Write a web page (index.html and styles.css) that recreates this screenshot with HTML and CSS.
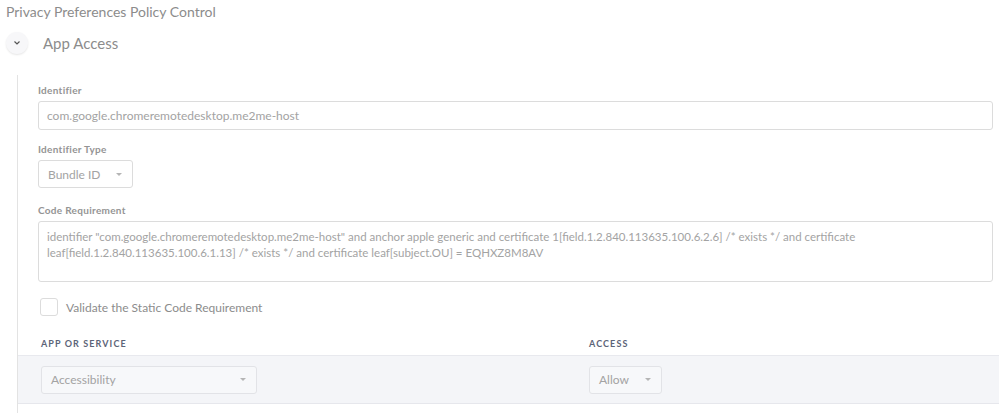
FILE: index.html
```html
<!DOCTYPE html>
<html lang="en">
<head>
    <meta charset="UTF-8">
    <title>Privacy Preferences Policy Control</title>
    <link rel="stylesheet" href="styles.css">
</head>
<body>
    <h1 class="page-title">Privacy Preferences Policy Control</h1>
    <div class="section-head">
        <span class="toggle">
            <svg width="8" height="6" viewBox="0 0 8 6"><path d="M1.5 1.5 L4 4 L6.5 1.5" fill="none" stroke="#555" stroke-width="1.2"/></svg>
        </span>
        <span class="section-title">App Access</span>
    </div>
    <div class="section-body">
        <div class="fields">
            <label class="field-label">Identifier</label>
            <div class="text-input">com.google.chromeremotedesktop.me2me-host</div>

            <label class="field-label">Identifier Type</label>
            <div class="select select-bundle">Bundle ID <span class="caret"></span></div>

            <label class="field-label">Code Requirement</label>
            <div class="text-area">identifier "com.google.chromeremotedesktop.me2me-host" and anchor apple generic and certificate 1[field.1.2.840.113635.100.6.2.6] /* exists */ and certificate leaf[field.1.2.840.113635.100.6.1.13] /* exists */ and certificate leaf[subject.OU] = EQHXZ8M8AV</div>

            <div class="check-row">
                <span class="checkbox"></span>
                <span class="check-label">Validate the Static Code Requirement</span>
            </div>
        </div>

        <div class="table">
            <div class="table-head">
                <div class="col-app">App or Service</div>
                <div class="col-access">Access</div>
            </div>
            <div class="table-row">
                <div class="col-app"><div class="select select-app">Accessibility <span class="caret"></span></div></div>
                <div class="col-access"><div class="select select-access">Allow <span class="caret"></span></div></div>
            </div>
        </div>
    </div>
</body>
</html>
```

FILE: styles.css
```css
body {
    margin: 0;
    font-family: Lato, "Open Sans", sans-serif;
    color: #999;
    background: #fff;
    overflow: hidden;
}
.page-title {
    margin: 0;
    padding: 4px 0 0 6px;
    font-size: 14px;
    font-weight: normal;
    color: #8c8c8c;
    line-height: 16px;
}
.section-head {
    display: flex;
    align-items: center;
    padding: 11px 0 0 6px;
    height: 24px;
}
.toggle {
    width: 22px;
    height: 22px;
    border-radius: 50%;
    background: #f7f7f9;
    box-shadow: 0 1px 2px rgba(0, 0, 0, 0.1);
    display: flex;
    align-items: center;
    justify-content: center;
}
.section-title {
    margin-left: 15px;
    font-size: 15px;
    color: #8c8c8c;
}
.section-body {
    margin: 20px 0 0 17px;
    border-left: 1px solid #e3e3e3;
    padding-top: 9px;
    height: 338px;
    box-sizing: border-box;
}
.fields {
    padding: 0 6px 0 20px;
}
.field-label {
    display: block;
    font-size: 10px;
    font-weight: bold;
    color: #949494;
    letter-spacing: 0.3px;
    line-height: 12px;
    margin-bottom: 5px;
}
.text-input, .text-area, .select {
    border: 1px solid #dcdcdc;
    border-radius: 3px;
    background: #fff;
    font-size: 12px;
    color: #a3a3a3;
    box-sizing: border-box;
}
.text-input {
    height: 29px;
    line-height: 27px;
    padding: 0 8px;
    margin-bottom: 13px;
}
.text-area {
    height: 61px;
    padding: 7px 8px;
    line-height: 16px;
    font-size: 11.5px;
    margin-bottom: 15px;
}
.select {
    display: flex;
    align-items: center;
    justify-content: space-between;
    height: 28px;
    padding: 0 10px 0 9px;
}
.select-bundle {
    width: 95px;
    margin-bottom: 16px;
}
.caret {
    width: 0;
    height: 0;
    border-left: 3px solid transparent;
    border-right: 3px solid transparent;
    border-top: 3px solid #b5b5b5;
}
.check-row {
    display: flex;
    align-items: center;
    padding-left: 2px;
    height: 20px;
}
.checkbox {
    width: 18px;
    height: 18px;
    border: 1px solid #dcdcdc;
    border-radius: 3px;
    box-sizing: border-box;
}
.check-label {
    margin-left: 8px;
    font-size: 12px;
    color: #8c8c8c;
}
.table {
    margin-top: 9px;
}
.table-head, .table-row {
    display: flex;
}
.table-head {
    height: 30px;
    align-items: center;
    font-size: 9px;
    font-weight: bold;
    text-transform: uppercase;
    letter-spacing: 1.1px;
    color: #5c6478;
    border-bottom: 1px solid #e8e9ee;
    padding-top: 6px;
    box-sizing: border-box;
}
.table-row {
    height: 48px;
    align-items: center;
    background: #f4f5f8;
    border-bottom: 1px solid #e6e7ec;
    box-sizing: border-box;
}
.col-app {
    width: 571px;
    padding-left: 23px;
    box-sizing: border-box;
}
.col-access {
    flex: 1;
}
.select-app {
    width: 216px;
    background: #f7f8fa;
    border-color: #e2e3e7;
}
.select-access {
    width: 73px;
    background: #f7f8fa;
    border-color: #e2e3e7;
}
```
